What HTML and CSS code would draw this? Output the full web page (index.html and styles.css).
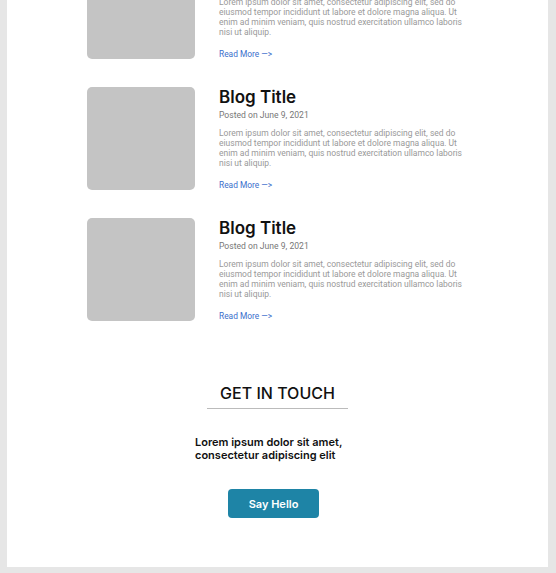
FILE: index.html
```html
<!DOCTYPE html>
<html lang="en">
<head>
    <meta charset="UTF-8">
    <title>Blog</title>
    <link rel="stylesheet" href="styles.css">
</head>
<body>
<div class="wrap">
    <section class="posts">
        <article class="post">
            <div class="thumb"></div>
            <div class="info">
                <h2>Blog Title</h2>
                <p class="date">Posted on June 9, 2021</p>
                <p class="text">Lorem ipsum dolor sit amet, consectetur adipiscing elit, sed do eiusmod tempor incididunt ut labore et dolore magna aliqua. Ut enim ad minim veniam, quis nostrud exercitation ullamco laboris nisi ut aliquip.</p>
                <a href="#" class="more">Read More ―&gt;</a>
            </div>
        </article>
        <article class="post">
            <div class="thumb"></div>
            <div class="info">
                <h2>Blog Title</h2>
                <p class="date">Posted on June 9, 2021</p>
                <p class="text">Lorem ipsum dolor sit amet, consectetur adipiscing elit, sed do eiusmod tempor incididunt ut labore et dolore magna aliqua. Ut enim ad minim veniam, quis nostrud exercitation ullamco laboris nisi ut aliquip.</p>
                <a href="#" class="more">Read More ―&gt;</a>
            </div>
        </article>
        <article class="post">
            <div class="thumb"></div>
            <div class="info">
                <h2>Blog Title</h2>
                <p class="date">Posted on June 9, 2021</p>
                <p class="text">Lorem ipsum dolor sit amet, consectetur adipiscing elit, sed do eiusmod tempor incididunt ut labore et dolore magna aliqua. Ut enim ad minim veniam, quis nostrud exercitation ullamco laboris nisi ut aliquip.</p>
                <a href="#" class="more">Read More ―&gt;</a>
            </div>
        </article>
    </section>
    <section class="contact">
        <h2>GET IN TOUCH</h2>
        <p>Lorem ipsum dolor sit amet, consectetur adipiscing elit</p>
        <button>Say Hello</button>
    </section>
</div>
</body>
</html>
```

FILE: styles.css
```css
* {margin:0; padding:0; box-sizing:border-box;}
body {background:#e6e6e6; font-family:Roboto, "Liberation Sans", sans-serif;}
.wrap {background:#fff; margin:0 8px 6px 7px; padding-bottom:49px;}

/* blog list */
.posts {display:flex; flex-direction:column; gap:28px; width:380px; margin:-44px 0 0 80px;}
.post {display:flex; gap:24px; align-items:flex-start; height:103px;}
.thumb {width:108px; height:103px; flex:none; background:#c4c4c4; border-radius:5px;}
.info {width:248px;}
.info h2 {font-family:Inter, "Noto Sans", sans-serif; font-weight:600; font-size:17px; line-height:20px; color:#111;}
.date {margin-top:2px; font-size:8.6px; line-height:12px; color:#777;}
.text {margin-top:7px; font-size:8.5px; line-height:10px; color:#999;}
.more {display:block; margin-top:12px; font-size:8.4px; line-height:10px; color:#3b6fcc; text-decoration:none;}

/* contact */
.contact {display:flex; flex-direction:column; align-items:center; margin-top:62px;}
.contact h2 {font-family:Inter, "Noto Sans", sans-serif; font-weight:500; font-size:16px; line-height:20px; color:#111; width:141px; text-align:center; padding-bottom:5px; border-bottom:1px solid #bbb;}
.contact p {width:165px; margin-top:27px; font-family:Inter, "Noto Sans", sans-serif; font-weight:600; font-size:11px; line-height:13px; color:#111;}
.contact button {margin:27px 8px 0 0; width:91px; height:29px; border:0; border-radius:4px; background:#1e84a6; color:#fff; font-family:Inter, "Noto Sans", sans-serif; font-weight:600; font-size:11px; cursor:pointer;}
```
